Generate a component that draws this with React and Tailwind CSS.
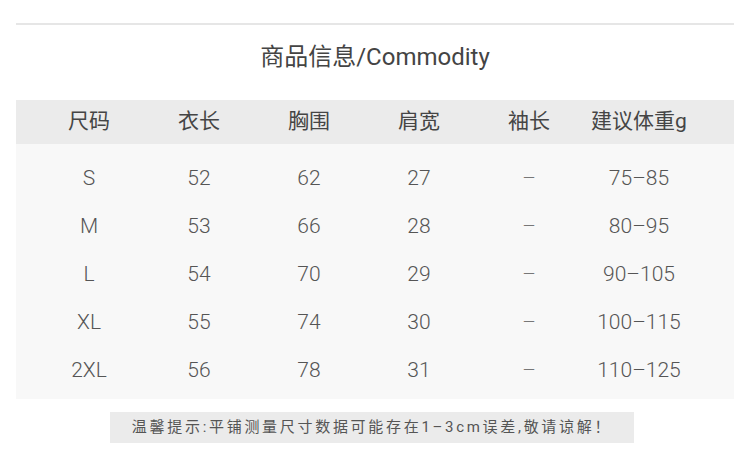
import React from "react";

const FONT = { fontFamily: 'Roboto, "Noto Sans CJK SC", sans-serif' };

const headers = ["尺码", "衣长", "胸围", "肩宽", "袖长", "建议体重g"];

const rows = [
  ["S", "52", "62", "27", "–", "75–85"],
  ["M", "53", "66", "28", "–", "80–95"],
  ["L", "54", "70", "29", "–", "90–105"],
  ["XL", "55", "74", "30", "–", "100–115"],
  ["2XL", "56", "78", "31", "–", "110–125"],
];

export default function App() {
  return (
    <div className="w-[750px] h-[464px] bg-white pt-[23px] overflow-hidden" style={FONT}>
      <div className="mx-[16px] h-[2px] bg-[#e6e6e6]" />

      <h1 className="mt-[16px] mb-[27px] text-center text-[24px] leading-[32px] text-[#444] font-normal">
        商品信息/Commodity
      </h1>

      {/* table */}
      <div className="mx-[16px]">
        <div className="grid grid-cols-[110px_110px_110px_110px_110px_110px] pl-[18px] h-[44px] items-center bg-[#ebebeb]">
          {headers.map((h) => (
            <div key={h} className="text-center text-[21px] text-[#454545]">
              {h}
            </div>
          ))}
        </div>

        <div className="bg-[#f8f8f8] h-[255px] pt-[11px]">
          {rows.map((r) => (
            <div
              key={r[0]}
              className="grid grid-cols-[110px_110px_110px_110px_110px_110px] pl-[18px] h-[48px] items-center"
            >
              {r.map((c, i) => (
                <div
                  key={i}
                  className={
                    "text-center text-[21px] font-light " +
                    (c === "–" ? "text-[#777]" : "text-[#555]")
                  }
                >
                  {c}
                </div>
              ))}
            </div>
          ))}
        </div>
      </div>

      <div className="mt-[13px] ml-[110px] w-[524px] h-[31px] bg-[#ebebeb] flex items-center justify-center">
        <span className="text-[15px] tracking-[2.7px] text-[#555]">
          温馨提示:平铺测量尺寸数据可能存在1–3cm误差,敬请谅解！
        </span>
      </div>
    </div>
  );
}
